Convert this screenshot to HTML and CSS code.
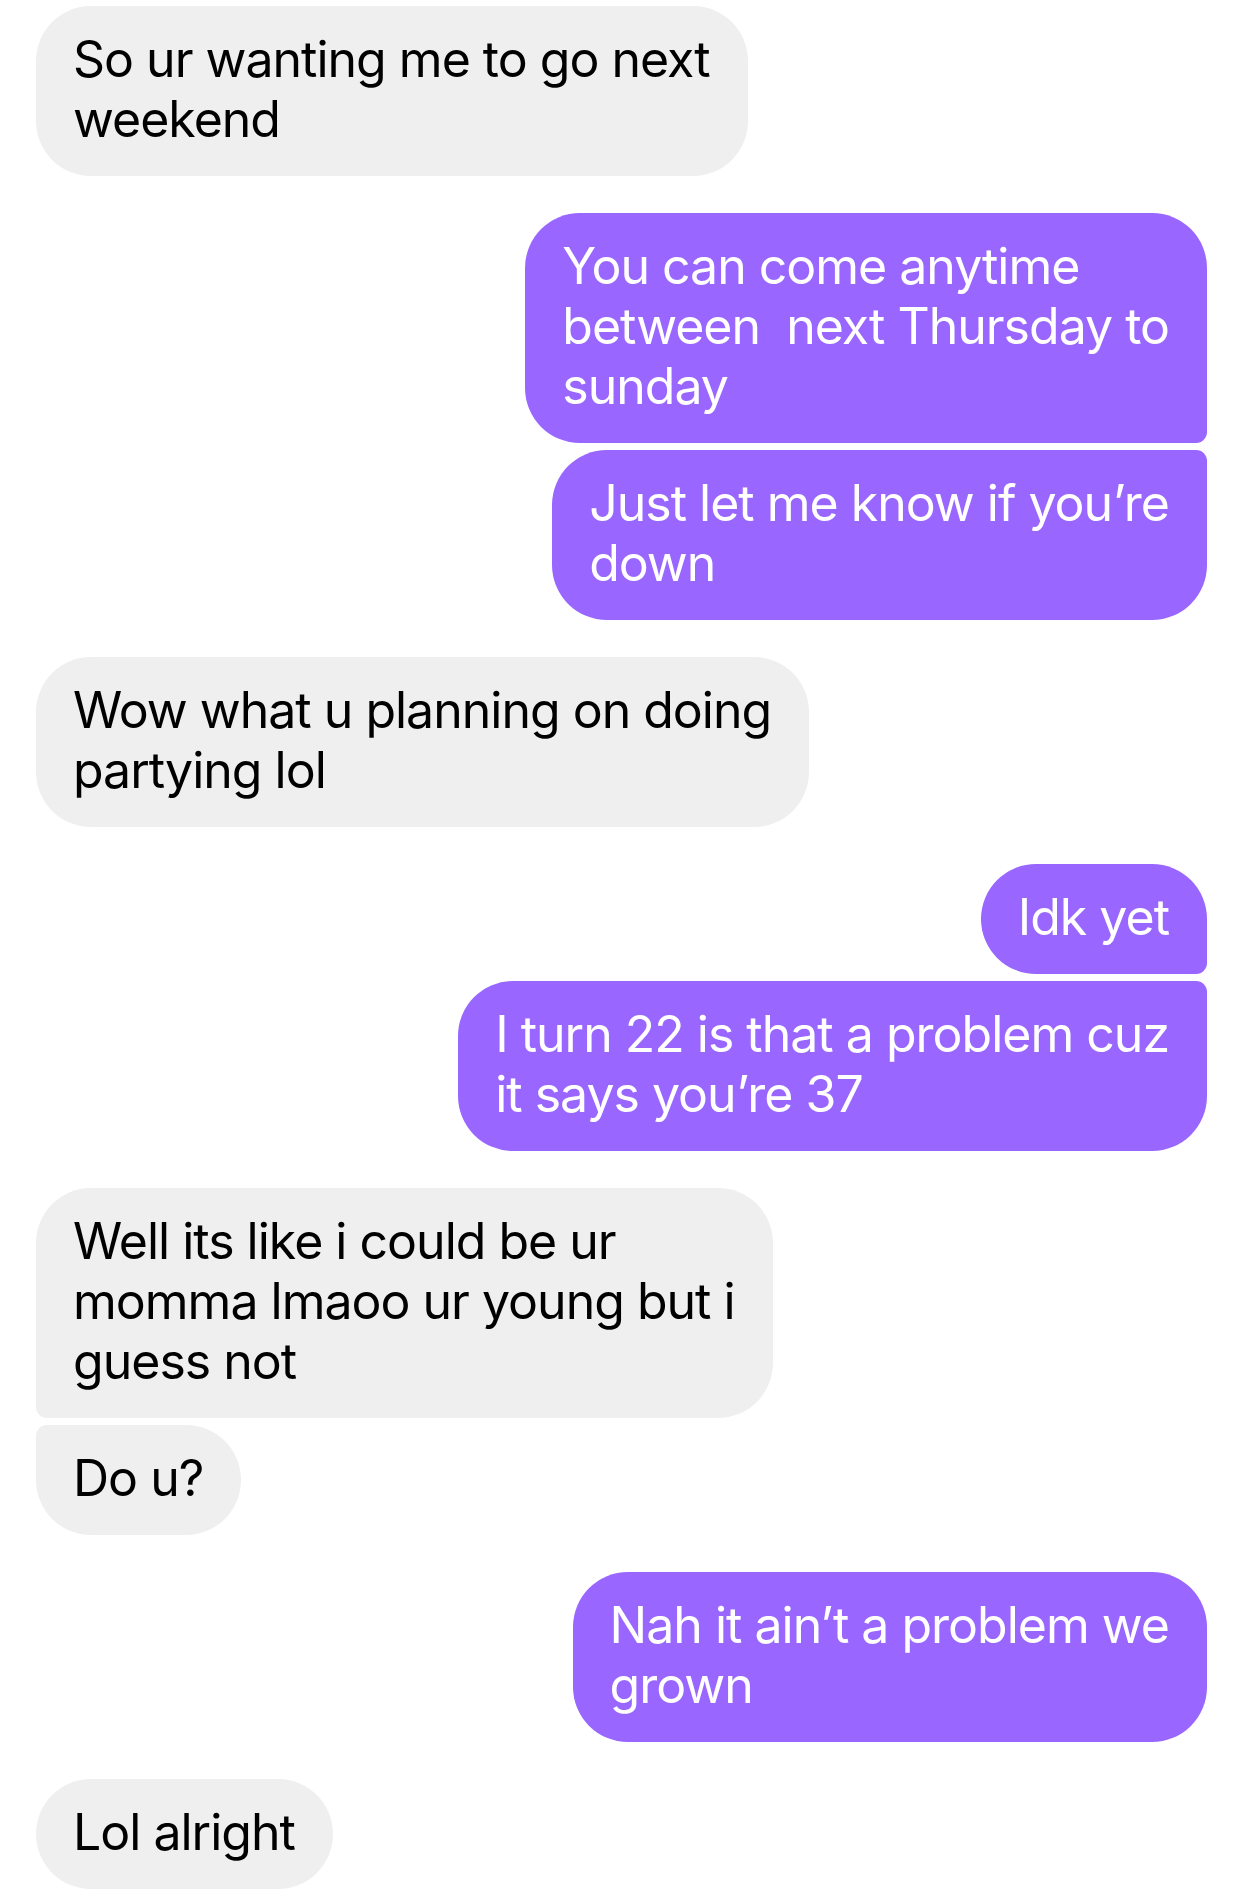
FILE: index.html
```html
<!DOCTYPE html>
<html lang="en">
<head>
<meta charset="utf-8">
<title>Chat</title>
<link rel="stylesheet" href="styles.css">
</head>
<body>
<main class="thread">
  <div class="group in">
    <div class="bubble">So ur wanting me to go next<br>weekend</div>
  </div>
  <div class="group out">
    <div class="bubble">You can come anytime<br>between&nbsp; next Thursday to<br>sunday</div>
    <div class="bubble">Just let me know if you’re<br>down</div>
  </div>
  <div class="group in">
    <div class="bubble">Wow what u planning on doing<br>partying lol</div>
  </div>
  <div class="group out">
    <div class="bubble">Idk yet</div>
    <div class="bubble">I turn 22 is that a problem cuz<br>it says you’re 37</div>
  </div>
  <div class="group in">
    <div class="bubble">Well its like i could be ur<br>momma lmaoo ur young but i<br>guess not</div>
    <div class="bubble">Do u?</div>
  </div>
  <div class="group out">
    <div class="bubble">Nah it ain’t a problem we<br>grown</div>
  </div>
  <div class="group in">
    <div class="bubble">Lol alright</div>
  </div>
</main>
</body>
</html>
```

FILE: styles.css
```css
html, body {
  margin: 0;
  padding: 0;
  background: #ffffff;
}

.thread {
  display: flex;
  flex-direction: column;
  gap: 37px;
  padding: 6px 35px 0 36px;
  font-family: "Inter", "Liberation Sans", sans-serif;
  font-size: 50px;
  line-height: 60px;
  letter-spacing: -1px;
}

.group {
  display: flex;
  flex-direction: column;
  gap: 7px;
}

.group.in {
  align-items: flex-start;
}

.group.out {
  align-items: flex-end;
}

.bubble {
  padding: 23px 38px 27px 37px;
  border-radius: 55px;
  white-space: nowrap;
}

.in .bubble {
  background: #efefef;
  color: #000000;
}

.out .bubble {
  background: #9966ff;
  color: #ffffff;
}

.out .bubble:not(:last-child) {
  border-bottom-right-radius: 11px;
}

.out .bubble:not(:first-child) {
  border-top-right-radius: 11px;
}

.in .bubble:not(:last-child) {
  border-bottom-left-radius: 11px;
}

.in .bubble:not(:first-child) {
  border-top-left-radius: 11px;
}
```
